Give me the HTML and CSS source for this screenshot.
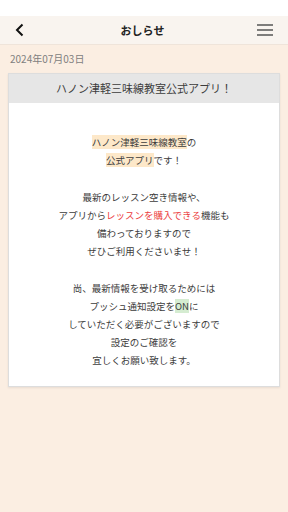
FILE: index.html
```html
<!DOCTYPE html>
<html lang="ja">
<head>
  <meta charset="UTF-8">
  <title>おしらせ</title>
  <link rel="stylesheet" href="styles.css">
</head>
<body>

<!-- === Status area === -->
<div class="status"></div>

<!-- === Header === -->
<header class="topbar">
  <button class="icon-btn">
    <svg width="12" height="14" viewBox="0 0 12 14"><path d="M8.5 1.5 L3 7 L8.5 12.5" fill="none" stroke="#111" stroke-width="2"/></svg>
  </button>
  <h1 class="title">おしらせ</h1>
  <button class="icon-btn">
    <svg width="16" height="12" viewBox="0 0 16 12"><path d="M0 1 H16 M0 6 H16 M0 11 H16" stroke="#555" stroke-width="1.4"/></svg>
  </button>
</header>

<!-- === News === -->
<main class="news">
  <p class="date">2024年07月03日</p>
  <article class="card">
    <h2 class="card-title">ハノン津軽三味線教室公式アプリ！</h2>
    <div class="card-body">
      <span class="mark">ハノン津軽三味線教室</span>の<br>
      <span class="mark">公式アプリ</span>です！<br>
      <br>
      最新のレッスン空き情報や、<br>
      アプリから<span class="red">レッスンを購入できる</span>機能も<br>
      備わっておりますので<br>
      ぜひご利用くださいませ！<br>
      <br>
      尚、最新情報を受け取るためには<br>
      プッシュ通知設定を<span class="green">ON</span>に<br>
      していただく必要がございますので<br>
      設定のご確認を<br>
      宜しくお願い致します。
    </div>
  </article>
</main>

</body>
</html>
```

FILE: styles.css
```css
/* ===== Global ===== */
* {
  margin: 0;
  padding: 0;
  box-sizing: border-box;
}
body {
  font-family: "Noto Sans CJK JP", "Noto Sans", sans-serif;
  background: #fbeee2;
  color: #3c3c3c;
  width: 288px;
  min-height: 512px;
}
.status {
  height: 16px;
  background: #fff;
}

/* ===== Header ===== */
.topbar {
  height: 29px;
  background: #f9f4ef;
  border-bottom: 1px solid #efe4da;
  display: flex;
  align-items: center;
  justify-content: space-between;
  padding: 0 13px 0 10px;
}
.icon-btn {
  background: none;
  border: none;
  width: 20px;
  height: 20px;
  display: flex;
  align-items: center;
  justify-content: center;
}
.title {
  font-size: 11px;
  font-weight: bold;
  color: #222;
}

/* ===== News ===== */
.news {
  padding: 7px 8px;
}
.date {
  font-size: 10px;
  color: #808080;
  line-height: 13px;
  margin-bottom: 8px;
  padding-left: 2px;
}
.card {
  background: #fff;
  border: 1px solid #ddd;
  box-shadow: 0 1px 2px rgba(0, 0, 0, 0.08);
}
.card-title {
  background: #e6e6e6;
  font-size: 11px;
  font-weight: normal;
  text-align: center;
  height: 29px;
  line-height: 29px;
}
.card-body {
  text-align: center;
  font-size: 9.5px;
  line-height: 18.2px;
  padding: 30px 0 16px;
}
.mark {
  background: #fde8c9;
}
.red {
  color: #ec3c3c;
}
.green {
  background: #d5ecd1;
}
```
